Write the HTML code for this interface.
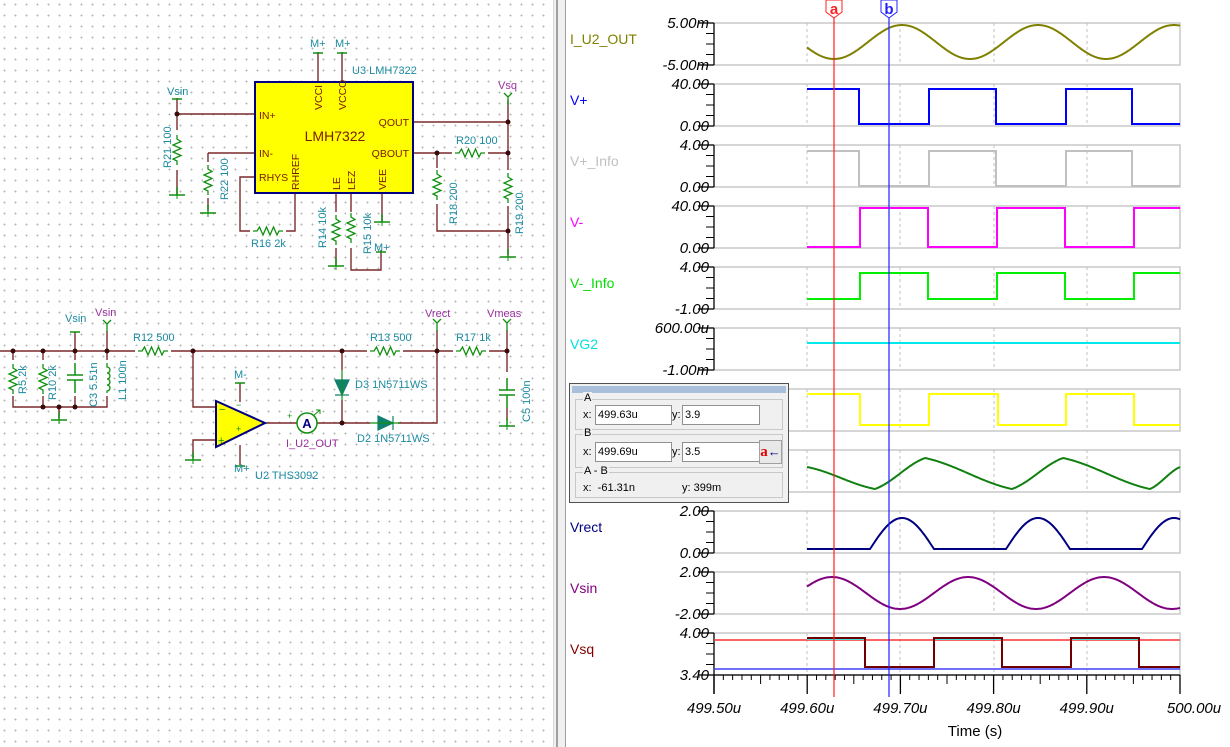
<!DOCTYPE html>
<html><head><meta charset="utf-8">
<style>
html,body{margin:0;padding:0;}
body{width:1230px;height:747px;overflow:hidden;background:#fff;position:relative;font-family:"Liberation Sans",sans-serif;}
#sch{position:absolute;left:0;top:0;width:553px;height:747px;background-color:#fff;
background-image:radial-gradient(circle,#b4b4b4 0.8px,transparent 1.1px);background-size:11px 11px;background-position:-1px -1px;}
svg{position:absolute;left:0;top:0;}
</style></head><body>
<div id="sch"></div>
<div style="position:absolute;left:553px;top:0;width:12px;height:747px;background:#f0f0f0;border-left:1px solid #d8d8d8;"></div>
<div style="position:absolute;left:556px;top:0;width:2px;height:747px;background:#a0a0a0;"></div>
<div style="position:absolute;left:565px;top:0;width:665px;height:747px;background:#fff;border-left:1px solid #a0a0a0;"></div>

<svg width="1230" height="747" viewBox="0 0 1230 747" font-family="Liberation Sans, sans-serif">
<defs>
<g id="rv"><path d="M0,0 L0,4 L4,6.5 L-4,10 L4,13.5 L-4,17 L4,20.5 L-4,24 L0,26 L0,30" fill="none" stroke="#109010" stroke-width="1.3"/></g>
<g id="gnd"><path d="M0,0 V8 M-8,8 H8" stroke="#109010" stroke-width="1.5" fill="none"/><path d="M0,8 V12" stroke="#109010" stroke-width="1"/></g>
<g id="cap"><path d="M0,0 V12 M-8,12 H8 M-8,17 H8 M0,17 V30" stroke="#109010" stroke-width="1.5" fill="none"/></g>
<g id="arw"><path d="M0,12 V4 M0,4 L-4,0 M0,4 L4,0" stroke="#109010" stroke-width="1.3" fill="none"/></g>
</defs>
<g stroke="#7a2a2a" stroke-width="1.4" fill="none">
<path d="M177,98 V195 M177,114 H255 M208,153 H255 M208,153 V210"/>
<path d="M255,177 H240 V231 H295 V193"/>
<path d="M318,52 V82 M342,52 V82"/>
<path d="M413,122 H508 M508,100 V255 M413,153 H508 M437,153 V231 H508"/>
<path d="M336,193 V265 M351,193 V270 H381 V250 M382,193 V222"/>
</g>
<rect x="255" y="82" width="158" height="111" fill="#ffff00" stroke="#000080" stroke-width="2"/>
<g fill="#7a1a00" font-size="10.5">
<text x="259" y="119">IN+</text><text x="259" y="157">IN-</text><text x="259" y="181">RHYS</text>
<text x="409" y="126" text-anchor="end">QOUT</text><text x="409" y="157" text-anchor="end">QBOUT</text>
<text transform="translate(322,110) rotate(-90)">VCCI</text>
<text transform="translate(346,110) rotate(-90)">VCCO</text>
<text transform="translate(299,190) rotate(-90)">RHREF</text>
<text transform="translate(340,190) rotate(-90)">LE</text>
<text transform="translate(355,190) rotate(-90)">LEZ</text>
<text transform="translate(386,190) rotate(-90)">VEE</text>
</g>
<text x="335" y="141" text-anchor="middle" font-size="14" fill="#7a1a00">LMH7322</text>
<g fill="#1a8aa0" font-size="11">
<text x="310" y="47">M+</text><text x="335" y="47">M+</text><text x="352" y="74">U3 LMH7322</text>
<text x="167" y="95">Vsin</text>
<text transform="translate(171,168) rotate(-90)">R21 100</text>
<text transform="translate(228,200) rotate(-90)">R22 100</text>
<text x="251" y="247">R16 2k</text>
<text x="456" y="144">R20 100</text>
<text transform="translate(457,224) rotate(-90)">R18 200</text>
<text transform="translate(523,234) rotate(-90)">R19 200</text>
<text transform="translate(326,248) rotate(-90)">R14 10k</text>
<text transform="translate(371,254) rotate(-90)">R15 10k</text>
<text x="374" y="251">M+</text>
</g>
<text x="498" y="89" fill="#9a30a0" font-size="11">Vsq</text>
<rect x="172" y="130" width="10" height="40" fill="#fff" stroke="none"/>
<use href="#rv" x="177" y="135"/>
<rect x="203" y="162" width="10" height="36" fill="#fff"/>
<use href="#rv" x="208" y="165"/>
<rect x="250" y="226" width="36" height="10" fill="#fff"/>
<use href="#rv" transform="translate(253,231) rotate(-90)"/>
<rect x="452" y="148" width="36" height="10" fill="#fff"/>
<use href="#rv" transform="translate(455,153) rotate(-90)"/>
<rect x="432" y="168" width="10" height="36" fill="#fff"/>
<use href="#rv" x="437" y="170"/>
<rect x="503" y="170" width="10" height="36" fill="#fff"/>
<use href="#rv" x="508" y="173"/>
<rect x="331" y="212" width="10" height="36" fill="#fff"/>
<use href="#rv" x="336" y="215"/>
<rect x="346" y="212" width="10" height="36" fill="#fff"/>
<use href="#rv" x="351" y="213"/>
<use href="#gnd" x="177" y="187"/><use href="#gnd" x="208" y="205"/><use href="#gnd" x="336" y="258"/><use href="#gnd" x="382" y="214"/><use href="#gnd" x="508" y="249"/>
<path d="M313,53 H323 M337,53 H347 M376,252 H386 M172,99 H182" stroke="#109010" stroke-width="1.5"/>
<use href="#arw" x="508" y="93"/>
<g fill="#3a0a0a"><circle cx="177" cy="114" r="2.5"/><circle cx="437" cy="153" r="2.5"/><circle cx="508" cy="153" r="2.5"/><circle cx="508" cy="122" r="2.5"/><circle cx="508" cy="231" r="2.5"/></g>

<g stroke="#7a2a2a" stroke-width="1.4" fill="none">
<path d="M0,351 H507 M13,351 V407 H107 V351 M43,351 V407 M75,351 V407 M75,332 V351 M107,331 V351 M59,407 V418"/>
<path d="M193,351 V407 H215 M215,440 H193 V458"/>
<path d="M265,423 H297 M317,423 H342 V351 M342,423 H437 V351 M437,330 V351 M507,330 V420"/>
<path d="M240,383 V402 M240,445 V465"/>
</g>
<g fill="#fff"><rect x="8" y="360" width="10" height="36"/><rect x="38" y="360" width="10" height="36"/><rect x="68" y="360" width="14" height="36"/><rect x="102" y="360" width="10" height="36"/>
<rect x="135" y="346" width="36" height="10"/><rect x="367" y="346" width="36" height="10"/><rect x="453" y="346" width="36" height="10"/><rect x="500" y="372" width="14" height="36"/><rect x="336" y="370" width="12" height="30"/><rect x="370" y="417" width="28" height="12"/></g>
<use href="#rv" x="13" y="364"/><use href="#rv" x="43" y="364"/><use href="#cap" x="75" y="363"/>
<path d="M107,363 V367 a3,3 0 0 1 0,6 a3,3 0 0 1 0,6 a3,3 0 0 1 0,6 a3,3 0 0 1 0,6 V393" stroke="#109010" stroke-width="1.3" fill="none"/>
<use href="#rv" transform="translate(138,351) rotate(-90)"/>
<use href="#rv" transform="translate(370,351) rotate(-90)"/>
<use href="#rv" transform="translate(456,351) rotate(-90)"/>
<use href="#cap" x="507" y="378"/>
<use href="#gnd" x="59" y="412"/><use href="#gnd" x="193" y="452"/><use href="#gnd" x="507" y="418"/>
<path d="M335,380 H349 L342,395 Z M335,395 H349" fill="#108070" stroke="#108070" stroke-width="1.2"/>
<path d="M342,370 V400" stroke="#109010" stroke-width="1.2"/>
<path d="M378,416 V430 L393,423 Z M393,416 V430" fill="#108070" stroke="#108070" stroke-width="1.2"/>
<path d="M370,423 H400" stroke="#109010" stroke-width="1.2"/>
<path d="M216,401 L265,423 L216,447 Z" fill="#ffff00" stroke="#000080" stroke-width="2"/>
<text x="219" y="413" font-size="11" fill="#109010">−</text><text x="218" y="444" font-size="11" fill="#109010">+</text><text x="236" y="432" font-size="9" fill="#109010">+</text><text x="236" y="408" font-size="9" fill="#109010">−</text>
<circle cx="307" cy="423" r="10" fill="#fff" stroke="#109010" stroke-width="1.5"/>
<text x="307" y="428" font-size="13" font-weight="bold" fill="#000080" text-anchor="middle">A</text>
<path d="M313,416 L320,410 M316,410 H320 V414" stroke="#109010" stroke-width="1" fill="none"/>
<text x="287" y="419" font-size="9" fill="#109010">+</text>
<path d="M70,332 H80 M235,383 H245 M235,466 H245" stroke="#109010" stroke-width="1.5"/>
<use href="#arw" x="107" y="320"/><use href="#arw" x="437" y="319"/><use href="#arw" x="507" y="319"/>
<g fill="#3a0a0a"><circle cx="13" cy="351" r="2.5"/><circle cx="43" cy="351" r="2.5"/><circle cx="75" cy="351" r="2.5"/><circle cx="107" cy="351" r="2.5"/><circle cx="193" cy="351" r="2.5"/><circle cx="342" cy="351" r="2.5"/><circle cx="437" cy="351" r="2.5"/><circle cx="507" cy="351" r="2.5"/><circle cx="43" cy="407" r="2.5"/><circle cx="59" cy="407" r="2.5"/><circle cx="75" cy="407" r="2.5"/><circle cx="342" cy="423" r="2.5"/></g>
<g fill="#1a8aa0" font-size="11">
<text x="65" y="322">Vsin</text><text x="133" y="341">R12 500</text><text x="370" y="341">R13 500</text><text x="456" y="341">R17 1k</text>
<text transform="translate(26,394) rotate(-90)">R5 2k</text>
<text transform="translate(56,400) rotate(-90)">R10 2k</text>
<text transform="translate(97,407) rotate(-90)">C3 5.51n</text>
<text transform="translate(126,400) rotate(-90)">L1 100n</text>
<text transform="translate(530,422) rotate(-90)">C5 100n</text>
<text x="355" y="388">D3 1N5711WS</text><text x="357" y="442">D2 1N5711WS</text>
<text x="234" y="378">M-</text><text x="234" y="472">M+</text><text x="255" y="479">U2 THS3092</text>
</g>
<g fill="#9a30a0" font-size="11"><text x="95" y="316">Vsin</text><text x="425" y="317">Vrect</text><text x="487" y="317">Vmeas</text><text x="286" y="447">I_U2_OUT</text></g>

<g id="plot"></g>
</svg>

<div style="position:absolute;left:569px;top:383px;width:218px;height:118px;background:#f0f0f0;border:1px solid #505050;font-size:11px;color:#000;">
 <div style="position:absolute;left:2px;top:2px;width:214px;height:7px;background:#a9c0dc;"></div>
 <div style="position:absolute;left:5px;top:15px;width:206px;height:29px;border:1px solid #c8c8c8;"></div>
 <div style="position:absolute;left:13px;top:8px;background:#f0f0f0;padding:0 1px;">A</div>
 <div style="position:absolute;left:13px;top:25px;">x:</div>
 <div style="position:absolute;left:25px;top:21px;width:73px;height:18px;background:#fff;border:1px solid #909090;line-height:18px;padding-left:2px;">499.63u</div>
 <div style="position:absolute;left:102px;top:25px;">y:</div>
 <div style="position:absolute;left:112px;top:21px;width:74px;height:18px;background:#fff;border:1px solid #909090;line-height:18px;padding-left:2px;">3.9</div>
 <div style="position:absolute;left:5px;top:50px;width:206px;height:32px;border:1px solid #c8c8c8;"></div>
 <div style="position:absolute;left:13px;top:43px;background:#f0f0f0;padding:0 1px;">B</div>
 <div style="position:absolute;left:13px;top:62px;">x:</div>
 <div style="position:absolute;left:25px;top:58px;width:73px;height:18px;background:#fff;border:1px solid #909090;line-height:18px;padding-left:2px;">499.69u</div>
 <div style="position:absolute;left:102px;top:62px;">y:</div>
 <div style="position:absolute;left:112px;top:58px;width:74px;height:18px;background:#fff;border:1px solid #909090;line-height:18px;padding-left:2px;">3.5</div>
 <div style="position:absolute;left:189px;top:56px;width:21px;height:22px;background:#e8e8e8;border:1px solid #a0a0a0;font-size:13px;line-height:22px;text-align:center;"><b style="color:#e00000;font-family:'Liberation Serif',serif;font-size:15px;">a</b><span style="color:#000080;">←</span></div>
 <div style="position:absolute;left:5px;top:88px;width:206px;height:24px;border:1px solid #c8c8c8;"></div>
 <div style="position:absolute;left:13px;top:81px;background:#f0f0f0;padding:0 1px;">A - B</div>
 <div style="position:absolute;left:13px;top:98px;">x:&nbsp;&nbsp;-61.31n</div>
 <div style="position:absolute;left:112px;top:98px;">y: 399m</div>
</div>

<script>
(function(){
var NS="http://www.w3.org/2000/svg",g=document.getElementById('plot');
function el(t,a,txt){var e=document.createElementNS(NS,t);for(var k in a)e.setAttribute(k,a[k]);if(txt!=null)e.textContent=txt;g.appendChild(e);return e;}
var L=714,R=1180,D0=807;
var T=[23,84,145,206,267,328,389,450,511,572,633],H=42;
var lab=[["5.00m","-5.00m"],["40.00","0.00"],["4.00","0.00"],["40.00","0.00"],["4.00","-1.00"],["600.00u","-1.00m"],["",""],["",""],["2.00","0.00"],["2.00","-2.00"],["4.00","3.40"]];
var names=[["I_U2_OUT","#808000"],["V+","#0000ff"],["V+_Info","#c0c0c0"],["V-","#ff00ff"],["V-_Info","#00dd00"],["VG2","#00e0e0"],["",""],["",""],["Vrect","#000080"],["Vsin","#800080"],["Vsq","#800000"]];
for(var i=0;i<11;i++){var t=T[i],b=t+H;
 el('path',{d:'M'+L+','+t+'H'+R+'V'+b+'H'+L,fill:'none',stroke:'#c8c8c8','stroke-width':1.5});
 [807,900,994,1087].forEach(function(x){el('line',{x1:x,y1:t,x2:x,y2:b,stroke:'#c0c0c0','stroke-dasharray':'3,3'});});
 el('line',{x1:L,y1:t,x2:L,y2:b+(i==10?19:0),stroke:'#000','stroke-width':1.3});
 el('line',{x1:698,y1:t,x2:L,y2:t,stroke:'#000','stroke-width':1.3});
 el('line',{x1:698,y1:b,x2:L,y2:b,stroke:'#000','stroke-width':1.3});
 for(var k=1;k<4;k++){var y=t+H*k/4;el('line',{x1:706,y1:y,x2:L,y2:y,stroke:'#000'});}
 if(lab[i][0]){el('text',{x:709,y:t+5,'text-anchor':'end','font-size':15,'font-style':'italic',fill:'#000'},lab[i][0]);
  el('text',{x:709,y:b+5,'text-anchor':'end','font-size':15,'font-style':'italic',fill:'#000'},lab[i][1]);}
 if(names[i][0])el('text',{x:570,y:t+21,'font-size':14,fill:names[i][1]},names[i][0]);
}
var ya=675;
el('line',{x1:L,y1:ya,x2:R,y2:ya,stroke:'#000','stroke-width':1.3});
for(var k=0;k<=50;k++){var x=L+(R-L)*k/50,len=(k%10==0)?19:(k%5==0?9:5);el('line',{x1:x,y1:ya,x2:x,y2:ya+len,stroke:'#000','stroke-width':k%10==0?1.3:1});}
var tl=["499.50u","499.60u","499.70u","499.80u","499.90u","500.00u"];
for(var k=0;k<6;k++){el('text',{x:L+(R-L)*k/5+(k==5?14:0),y:713,'text-anchor':'middle','font-size':15,'font-style':'italic',fill:'#000'},tl[k]);}
el('text',{x:975,y:736,'text-anchor':'middle','font-size':15,fill:'#000'},'Time (s)');
function wave(f,col,w){var d='';for(var x=D0;x<=R;x+=1){d+=(x==D0?'M':'L')+x+','+f(x).toFixed(1);}el('path',{d:d,fill:'none',stroke:col,'stroke-width':w||2});}
function sq(edges,hiFirst,yh,yl,col){var d='M'+D0+','+(hiFirst?yh:yl),s=hiFirst;edges.forEach(function(e){d+='H'+e+'V'+(s?yl:yh);s=!s;});d+='H'+R;el('path',{d:d,fill:'none',stroke:col,'stroke-width':2});}
var P=136,TP=2*Math.PI;
wave(function(x){return 42+17*Math.cos(TP*(x-834)/P);},'#808000');
sq([859,929,996,1066,1132],1,89,124,'#0000ff');
sq([859,929,996,1066,1132],1,151,186,'#c0c0c0');
sq([860,928,997,1065,1134],0,208,247,'#ff00ff');
sq([860,928,997,1065,1134],0,273,299,'#00ee00');
el('line',{x1:D0,y1:343,x2:R,y2:343,stroke:'#00e8e8','stroke-width':2});
sq([860,929,998,1066,1134],1,394,425,'#ffff00');
wave(function(x){var pts=[[807,467],[875,489],[925,458],[1012,489],[1063,458],[1150,489],[1180,467]];for(var j=0;j<pts.length-1;j++){if(x<=pts[j+1][0]){var a=pts[j],c=pts[j+1],u=(x-a[0])/(c[0]-a[0]);u=(1-Math.cos(Math.PI*u))/2*0.4+u*0.6;return a[1]+(c[1]-a[1])*u;}}return 467;},'#108010');
wave(function(x){var ph=((x-870)%P+P)%P;if(ph<64){return 549-31*Math.sin(Math.PI*ph/64);}return 549;},'#000080');
wave(function(x){return 593-16*Math.cos(TP*(x-832)/P);},'#800080');
el('line',{x1:L,y1:640,x2:R,y2:640,stroke:'#ff3030','stroke-width':1.5});
el('line',{x1:L,y1:669,x2:R,y2:669,stroke:'#4040ff','stroke-width':1.5});
[[D0,865],[934,1002],[1071,1139]].forEach(function(s){el('line',{x1:s[0],y1:639,x2:s[1],y2:639,stroke:'#40e0e0','stroke-width':2});});
[[865,934],[1002,1071],[1139,R]].forEach(function(s){el('line',{x1:s[0],y1:667,x2:s[1],y2:667,stroke:'#70b000','stroke-width':2});});
sq([865,934,1002,1071,1139],1,638,667,'#700000');
el('line',{x1:834,y1:12,x2:834,y2:697,stroke:'#ff2020','stroke-width':1.2});
el('line',{x1:889,y1:12,x2:889,y2:697,stroke:'#2020ff','stroke-width':1.2});
el('path',{d:'M826,0 V12 L834,18 L842,12 V0 Z',fill:'#fff',stroke:'#ff2020'});
el('text',{x:834,y:14,'text-anchor':'middle','font-size':15,'font-weight':'bold',fill:'#ff2020'},'a');
el('path',{d:'M881,0 V12 L889,18 L897,12 V0 Z',fill:'#fff',stroke:'#2020ff'});
el('text',{x:889,y:14,'text-anchor':'middle','font-size':15,'font-weight':'bold',fill:'#2020ff'},'b');
})();
</script>
</body></html>
